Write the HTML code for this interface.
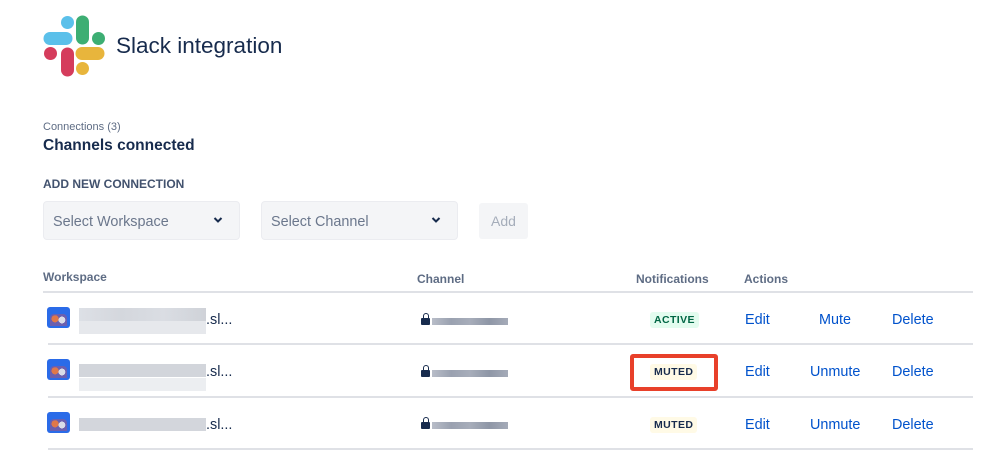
<!DOCTYPE html>
<html><head><meta charset="utf-8"><style>
*{margin:0;padding:0;box-sizing:border-box}
body{width:999px;height:475px;background:#fff;font-family:"Liberation Sans",sans-serif;color:#172B4D;position:relative;overflow:hidden}
.a{position:absolute;white-space:nowrap}
.dd{position:absolute;background:#F4F5F7;border:1px solid #EBECF0;border-radius:4px;height:39px;top:201px;font-size:14.4px;color:#6B778C;padding:12px 9px}
.chev{position:absolute;right:16px;top:14px}
.hd{font-size:12px;font-weight:bold;color:#5E6C84}
.ln{position:absolute;left:48px;width:925px;height:2px;background:#DFE1E6}
.lk{font-size:14.4px;color:#0052CC}
.lz{position:absolute;font-size:10.5px;font-weight:bold;padding:2px 4px;border-radius:3px;letter-spacing:.4px}
.av{position:absolute;left:47px;width:23px;height:21px;background:#2A6BE8;border-radius:3px;overflow:hidden}
.av:before{content:"";position:absolute;left:3px;top:7px;width:17px;height:12px;background:radial-gradient(circle at 30% 40%,#e0784a 0 25%,transparent 26%),radial-gradient(circle at 70% 50%,#d9dce8 0 25%,transparent 26%),#6a5fb0;border-radius:4px 4px 0 0}
.blur{position:absolute;left:79px;width:127px;height:13px;background:linear-gradient(90deg,#dde0e6,#d4d7dd,#dadde3,#cfd2d8)}
.cb{position:absolute;left:432px;width:76px;height:7px;background:linear-gradient(90deg,#b8bdc8,#9aa1b0,#a7adba,#8e96a6,#a5abb8)}
.lock{position:absolute;left:421px;width:9px;height:7px;background:#172B4D;border-radius:1px}
.lock:before{content:"";position:absolute;left:1.5px;top:-5px;width:6px;height:6px;border:1.5px solid #172B4D;border-bottom:none;border-radius:3px 3px 0 0;box-sizing:border-box}
</style></head><body>
<svg class="a" style="left:0;top:0" width="120" height="90">
<g stroke-linecap="round" stroke-width="13" fill="none">
<line x1="50" y1="38.5" x2="66" y2="38.5" stroke="#5BC0EA"/>
<line x1="82.5" y1="22" x2="82.5" y2="38" stroke="#3DAE73"/>
<line x1="67.5" y1="54" x2="67.5" y2="70" stroke="#D53C5C"/>
<line x1="82" y1="53.5" x2="98" y2="53.5" stroke="#E8B53C"/>
</g>
<circle cx="67.5" cy="22.5" r="6.5" fill="#5BC0EA"/>
<circle cx="98.5" cy="38.5" r="6.5" fill="#3DAE73"/>
<circle cx="50.5" cy="53.5" r="6.5" fill="#D53C5C"/>
<circle cx="82.5" cy="68.5" r="6.5" fill="#E8B53C"/>
</svg>
<div class="a" style="left:116px;top:33px;font-size:22.5px">Slack integration</div>
<div class="a" style="left:43px;top:121px;font-size:11px;color:#5E6C84">Connections (3)</div>
<div class="a" style="left:43px;top:137px;font-size:15.5px;font-weight:bold">Channels connected</div>
<div class="a" style="left:43px;top:177px;font-size:12px;font-weight:bold;color:#42526E">ADD NEW CONNECTION</div>
<div class="dd" style="left:43px;width:197px">Select Workspace<svg class="chev" width="10" height="8"><path d="M1.5 2l3.5 3.5 3.5-3.5" stroke="#172B4D" stroke-width="2" fill="none"/></svg></div>
<div class="dd" style="left:261px;width:197px">Select Channel<svg class="chev" width="10" height="8"><path d="M1.5 2l3.5 3.5 3.5-3.5" stroke="#172B4D" stroke-width="2" fill="none"/></svg></div>
<div class="a" style="left:479px;top:203px;width:49px;height:36px;background:#F4F5F7;border-radius:3px;font-size:14px;color:#A5ADBA;text-align:center;line-height:36px">Add</div>
<div class="a hd" style="left:43px;top:270px">Workspace</div>
<div class="a hd" style="left:417px;top:272px">Channel</div>
<div class="a hd" style="left:636px;top:272px">Notifications</div>
<div class="a hd" style="left:744px;top:272px">Actions</div>
<div class="ln" style="top:291px;left:43px;width:930px"></div>
<div class="ln" style="top:343px"></div>
<div class="ln" style="top:396px"></div>
<div class="ln" style="top:448px"></div>

<div class="av" style="top:307px"></div>
<div class="av" style="top:359px"></div>
<div class="av" style="top:412px"></div>
<div class="blur" style="top:308px"></div><div class="blur" style="top:321px;background:#e6e8ec"></div>
<div class="blur" style="top:364px;background:#d2d5db"></div><div class="blur" style="top:378px;background:#eceef1"></div>
<div class="blur" style="top:418px;background:#d3d6dc"></div>
<div class="a" style="left:206px;top:312px;font-size:14.4px">.sl...</div>
<div class="a" style="left:206px;top:364px;font-size:14.4px">.sl...</div>
<div class="a" style="left:206px;top:417px;font-size:14.4px">.sl...</div>
<div class="lock" style="top:318px"></div><div class="cb" style="top:318px"></div>
<div class="lock" style="top:370px"></div><div class="cb" style="top:370px"></div>
<div class="lock" style="top:422px"></div><div class="cb" style="top:422px"></div>

<div class="lz" style="left:650px;top:312px;background:#E3FCEF;color:#006644">ACTIVE</div>
<div class="a" style="left:630px;top:354px;width:88px;height:37px;border:4px solid #E8402A;border-radius:3px"></div>
<div class="lz" style="left:650px;top:364px;background:#FFFAE6;color:#172B4D">MUTED</div>
<div class="lz" style="left:650px;top:417px;background:#FFFAE6;color:#172B4D">MUTED</div>

<div class="a lk" style="left:745px;top:312px">Edit</div>
<div class="a lk" style="left:819px;top:312px">Mute</div>
<div class="a lk" style="left:892px;top:312px">Delete</div>
<div class="a lk" style="left:745px;top:364px">Edit</div>
<div class="a lk" style="left:810px;top:364px">Unmute</div>
<div class="a lk" style="left:892px;top:364px">Delete</div>
<div class="a lk" style="left:745px;top:417px">Edit</div>
<div class="a lk" style="left:810px;top:417px">Unmute</div>
<div class="a lk" style="left:892px;top:417px">Delete</div>
</body></html>
